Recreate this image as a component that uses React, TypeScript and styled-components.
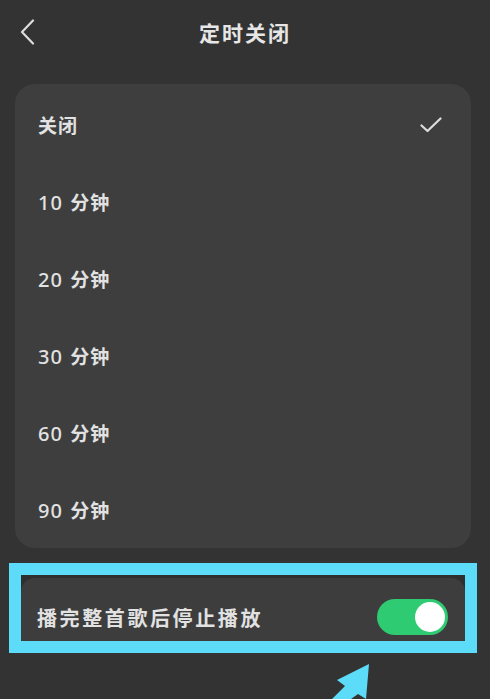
import * as React from 'react';
import styled, { createGlobalStyle } from 'styled-components';

/* ==================== [Style] ==================== */
const GlobalStyle=createGlobalStyle`
    html, body {
        margin: 0;
        padding: 0;
        background-color: #333333;
    }
    body {
        font-family: "Noto Sans CJK SC", "Noto Sans", sans-serif;
        color: #e4e4e4;
    }
`;

const Page=styled.div`
    position: relative;
    width: 490px;
    height: 699px;
    overflow: hidden;
    background-color: #333333;
`;

const Header=styled.header`
    display: grid;
    grid-template-columns: 64px 1fr 64px;
    align-items: center;
    height: 64px;
`;

const BackBtn=styled.button`
    display: flex;
    align-items: center;
    justify-content: flex-start;
    margin: 0;
    padding: 0 0 0 19px;
    height: 64px;
    border: 0;
    background: none;
    color: #dddddd;
`;

const Title=styled.h1`
    margin: 0;
    text-align: center;
    font-size: 21px;
    font-weight: 700;
    letter-spacing: 2px;
    color: #e6e6e6;
`;

const Card=styled.ul`
    list-style: none;
    margin: 20px 19px 0 15px;
    padding: 2px 0 0;
    border-radius: 20px;
    background-color: #3e3e3e;
`;

const Row=styled.li`
    display: flex;
    justify-content: space-between;
    align-items: center;
    height: 77px;
    padding: 0 29px 0 23px;
    font-size: 19px;
    font-weight: 700;
    letter-spacing: 1px;
    color: #e2e2e2;
`;

const Minutes=styled.span`
    font-family: "Noto Sans", sans-serif;
    font-weight: 500;
    font-size: 20px;
    margin-right: 2px;
`;

const Highlight=styled.div`
    box-sizing: border-box;
    margin: 15px 13px 0 9px;
    height: 90px;
    border: 12px solid #5cdcf8;
    background-color: #2f2f2f;
    padding-top: 3px;
`;

const OptionCard=styled.div`
    box-sizing: border-box;
    display: flex;
    justify-content: space-between;
    align-items: center;
    height: 63px;
    padding: 21px 17px 6px 16px;
    border-radius: 14px 14px 0 0;
    background-color: #3d3d3d;
    font-size: 20px;
    font-weight: 700;
    letter-spacing: 2.6px;
    color: #e2e2e2;
`;

const Track=styled.div<{ $on: boolean }>`
    box-sizing: border-box;
    display: flex;
    justify-content: ${p=>p.$on ? 'flex-end' : 'flex-start'};
    align-items: center;
    width: 71px;
    height: 36px;
    padding: 0 3px;
    border-radius: 18px;
    background-color: ${p=>p.$on ? '#2ecb72' : '#666666'};
`;

const Knob=styled.span`
    display: block;
    width: 30px;
    height: 30px;
    border-radius: 50%;
    background-color: #ffffff;
`;

const Pointer=styled.svg`
    position: absolute;
    left: 320px;
    top: 655px;
`;

/* ==================== [Component] ==================== */
const options=[0, 10, 20, 30, 60, 90];

const Check=()=>(
    <svg width="22" height="16" viewBox="0 0 22 16" fill="none">
        <path d="M1.5 8.5 L7.5 14 L20.5 1.5" stroke="#dddddd" strokeWidth="2.2" strokeLinecap="round" strokeLinejoin="round"/>
    </svg>
);

const App=()=>{
    const [selected, setSelected]=React.useState(0);
    const [stopAfter, setStopAfter]=React.useState(true);

    return (
        <Page>
            <GlobalStyle/>
            <Header>
                <BackBtn aria-label="返回">
                    <svg width="16" height="26" viewBox="0 0 16 26" fill="none">
                        <path d="M14 1.5 L3 13 L14 24.5" stroke="#dddddd" strokeWidth="2.2" strokeLinecap="round" strokeLinejoin="round"/>
                    </svg>
                </BackBtn>
                <Title>定时关闭</Title>
                <span/>
            </Header>
            <Card>
                {options.map((m, i)=>(
                    <Row key={m} onClick={()=>setSelected(i)}>
                        {m===0
                            ? <span>关闭</span>
                            : <span><Minutes>{m}</Minutes> 分钟</span>}
                        {selected===i && <Check/>}
                    </Row>
                ))}
            </Card>
            <Highlight>
                <OptionCard>
                    <span>播完整首歌后停止播放</span>
                    <Track $on={stopAfter} onClick={()=>setStopAfter(!stopAfter)}>
                        <Knob/>
                    </Track>
                </OptionCard>
            </Highlight>
            <Pointer width="60" height="44" viewBox="0 0 60 44">
                <polygon points="49,9 17,25 25,31 12,44 31,44 38,39 46,44" fill="#5cdcf8"/>
            </Pointer>
        </Page>
    );
}

export default App;
